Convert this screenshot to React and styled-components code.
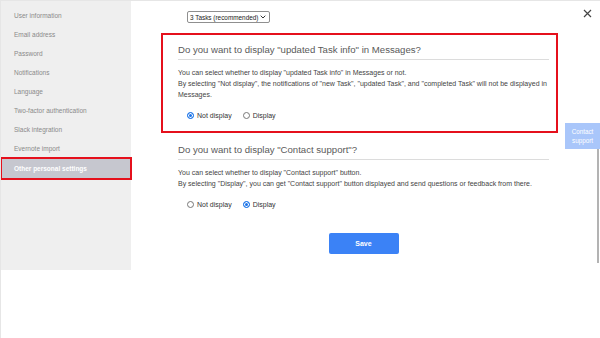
import React from 'react'
import styled, { createGlobalStyle } from 'styled-components'

const GlobalStyle = createGlobalStyle`
    html, body {
        margin: 0;
        padding: 0;
        background: #fff;
        font-family: "Liberation Sans", Arial, sans-serif;
    }
`

const menuItems = [
    'User information',
    'Email address',
    'Password',
    'Notifications',
    'Language',
    'Two-factor authentication',
    'Slack integration',
    'Evernote import',
    'Other personal settings',
]

function Radio({ checked, label }) {
    return (
        <RadioLabel>
            <RadioDot checked={checked} />
            {label}
        </RadioLabel>
    )
}

function App() {
    return (
        <Page>
            <GlobalStyle />
            <Sidebar>
                {menuItems.map((item, index) =>
                    <MenuItem key={index} active={index === menuItems.length - 1}>{item}</MenuItem>
                )}
            </Sidebar>

            <Main>
                <SelectBox>
                    3 Tasks (recommended)
                    <svg width="6" height="4" viewBox="0 0 6 4">
                        <path d="M0.7 0.7 L3 3 L5.3 0.7" fill="none" stroke="#333" strokeWidth="1" />
                    </svg>
                </SelectBox>

                <Section highlight>
                    <Heading>Do you want to display "updated Task info" in Messages?</Heading>
                    <Text>
                        You can select whether to display "updated Task info" in Messages or not.<br />
                        By selecting "Not display", the notifications of "new Task", "updated Task", and "completed Task" will not be displayed in Messages.
                    </Text>
                    <RadioGroup>
                        <Radio checked label="Not display" />
                        <Radio label="Display" />
                    </RadioGroup>
                </Section>

                <Section>
                    <Heading>Do you want to display "Contact support"?</Heading>
                    <Text>
                        You can select whether to display "Contact support" button.<br />
                        By selecting "Display", you can get "Contact support" button displayed and send questions or feedback from there.
                    </Text>
                    <RadioGroup>
                        <Radio label="Not display" />
                        <Radio checked label="Display" />
                    </RadioGroup>
                    <ButtonRow>
                        <SaveButton>Save</SaveButton>
                    </ButtonRow>
                </Section>
            </Main>

            <CloseButton>
                <svg width="9" height="9" viewBox="0 0 9 9">
                    <path d="M1 1 L8 8 M8 1 L1 8" stroke="#444" strokeWidth="1.2" />
                </svg>
            </CloseButton>

            <ContactTab>Contact<br />support</ContactTab>
            <ScrollThumb />
        </Page>
    )
}

export default App

const Page = styled.div`
    position: relative;
    width: 600px;
    height: 338px;
    display: flex;
    align-items: flex-start;
    box-sizing: border-box;
    border-top: 1px solid #e6e6e6;
    border-left: 1px solid #e6e6e6;
    overflow: hidden;
`

const Sidebar = styled.div`
    width: 130px;
    height: 269px;
    background: #efefef;
    padding-top: 5px;
    box-sizing: border-box;
    display: flex;
    flex-direction: column;
`

const MenuItem = styled.div`
    height: 19px;
    margin: 0 1px;
    padding-left: 12px;
    display: flex;
    align-items: center;
    font-size: 6.5px;
    color: ${props => props.active ? '#fff' : '#8a8a8a'};
    font-weight: ${props => props.active ? 700 : 400};
    background: ${props => props.active ? '#c6c7cf' : 'transparent'};
    box-shadow: ${props => props.active ? '0 0 0 2px #e5101c' : 'none'};
    margin-top: ${props => props.active ? '1px' : '0'};
`

const Main = styled.div`
    width: 397px;
    margin-left: 30px;
    padding-top: 10px;
    display: flex;
    flex-direction: column;
`

const SelectBox = styled.div`
    align-self: flex-start;
    margin-left: 26px;
    height: 10px;
    padding: 0 3px 0 2px;
    border: 1px solid #8f8f8f;
    border-radius: 2px;
    box-sizing: content-box;
    display: flex;
    align-items: center;
    gap: 2px;
    font-size: 6.4px;
    color: #222;
`

const Section = styled.div`
    margin-top: ${props => props.highlight ? '10px' : '0'};
    border: 2px solid ${props => props.highlight ? '#e5101c' : 'transparent'};
    padding: 8px 7px 11px 15px;
`

const Heading = styled.div`
    font-size: 9.6px;
    line-height: 14px;
    color: #5a5a5a;
    padding-bottom: 2px;
    border-bottom: 1px solid #dcdcdc;
`

const Text = styled.div`
    margin-top: 7px;
    font-size: 7px;
    line-height: 11px;
    color: #444;
`

const RadioGroup = styled.div`
    margin-top: 10px;
    padding-left: 9px;
    height: 10px;
    display: flex;
    align-items: center;
    gap: 11px;
`

const RadioLabel = styled.div`
    display: flex;
    align-items: center;
    gap: 3px;
    font-size: 7px;
    color: #333;
`

const RadioDot = styled.span`
    width: 5px;
    height: 5px;
    border-radius: 50%;
    border: 0.6px solid ${props => props.checked ? '#1a73e8' : '#777'};
    background: ${props => props.checked ? '#1a73e8' : '#fff'};
    box-shadow: ${props => props.checked ? 'inset 0 0 0 1px #fff' : 'none'};
`

const ButtonRow = styled.div`
    margin-top: 24px;
    display: flex;
    justify-content: center;
`

const SaveButton = styled.button`
    width: 70px;
    height: 21px;
    border: none;
    border-radius: 2px;
    background: #3b82f6;
    color: #fff;
    font-family: "Liberation Sans", Arial, sans-serif;
    font-size: 7px;
    font-weight: 700;
`

const CloseButton = styled.div`
    position: absolute;
    top: 8px;
    right: 8px;
    display: flex;
`

const ContactTab = styled.div`
    position: absolute;
    top: 122px;
    right: 0;
    width: 35px;
    height: 26px;
    background: #a9c6fa;
    color: #fff;
    font-size: 6.3px;
    line-height: 9.5px;
    text-align: center;
    display: flex;
    align-items: center;
    justify-content: center;
`

const ScrollThumb = styled.div`
    position: absolute;
    top: 148px;
    right: 1px;
    width: 2px;
    height: 114px;
    background: #b3b3b3;
`
